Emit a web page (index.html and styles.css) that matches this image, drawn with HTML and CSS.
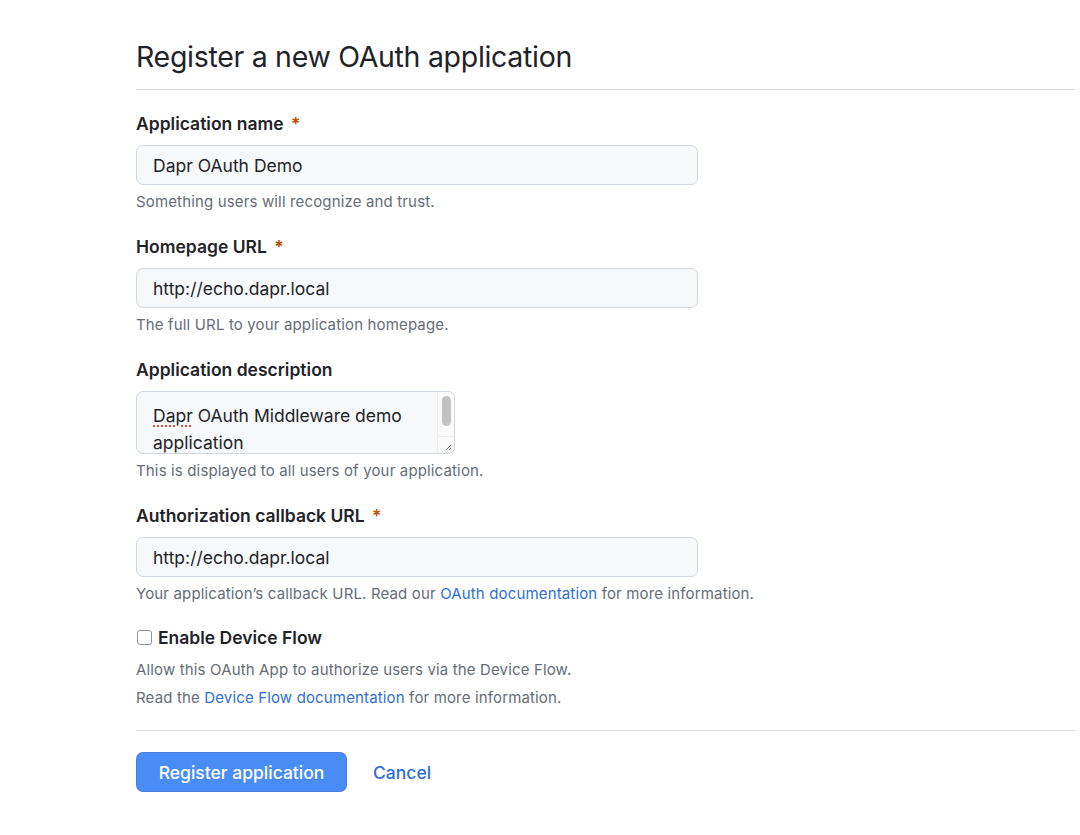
FILE: index.html
```html
<!DOCTYPE html>
<html>
<head>
<meta charset="utf-8">
<link rel="stylesheet" href="styles.css">
</head>
<body>
<main class="page">
  <h1 class="title">Register a new OAuth application</h1>
  <form class="form">
    <div class="group">
      <div class="label">Application name <span class="req">*</span></div>
      <div class="input">Dapr OAuth Demo</div>
      <div class="hint">Something users will recognize and trust.</div>
    </div>
    <div class="group">
      <div class="label">Homepage URL <span class="req">*</span></div>
      <div class="input">http://echo.dapr.local</div>
      <div class="hint">The full URL to your application homepage.</div>
    </div>
    <div class="group">
      <div class="label">Application description</div>
      <div class="textarea">
        <div class="ta-text"><span class="spell">Dapr</span> OAuth Middleware demo application</div>
        <div class="ta-bar">
          <div class="ta-track"><div class="ta-thumb"></div></div>
          <div class="ta-grip">
            <svg width="16" height="16" viewBox="0 0 16 16"><path d="M13 8 L8 13 M13 11 L11 13" stroke="#8a8a8a" stroke-width="1" fill="none"/></svg>
          </div>
        </div>
      </div>
      <div class="hint">This is displayed to all users of your application.</div>
    </div>
    <div class="group last">
      <div class="label">Authorization callback URL <span class="req">*</span></div>
      <div class="input">http://echo.dapr.local</div>
      <div class="hint">Your application’s callback URL. Read our <a class="link">OAuth documentation</a> for more information.</div>
    </div>
    <div class="check-row">
      <span class="checkbox"></span>
      <span class="check-label">Enable Device Flow</span>
    </div>
    <div class="note first">Allow this OAuth App to authorize users via the Device Flow.</div>
    <div class="note">Read the <a class="link">Device Flow documentation</a> for more information.</div>
    <div class="actions">
      <span class="btn">Register application</span>
      <a class="cancel">Cancel</a>
    </div>
  </form>
</main>
</body>
</html>
```
FILE: styles.css
```css
* { box-sizing: border-box; }
body {
  margin: 0;
  background: #ffffff;
  color: #1f2328;
  font-family: Inter, "Noto Sans", "Liberation Sans", sans-serif;
}
.page {
  padding: 38px 5px 0 136px;
}
.title {
  margin: 0;
  font-size: 28.5px;
  font-weight: 400;
  line-height: 38px;
  padding-bottom: 13px;
  border-bottom: 1px solid #d8dee4;
  letter-spacing: -0.3px;
}
.form {
  padding-top: 23px;
}
.group {
  margin-bottom: 24px;
}
.group.last {
  margin-bottom: 22px;
}
.label {
  font-size: 17.5px;
  font-weight: 600;
  line-height: 22px;
  margin-bottom: 10px;
}
.req {
  color: #bc4c00;
  margin-left: 3px;
}
.input {
  width: 562px;
  height: 40px;
  border: 1px solid #d0d7de;
  border-radius: 7px;
  background: #f6f8fa;
  padding: 0 16px;
  display: flex;
  align-items: center;
  font-size: 17.5px;
}
.hint {
  margin-top: 7px;
  font-size: 15px;
  line-height: 20px;
  color: #656d76;
  letter-spacing: 0.15px;
}
.link {
  color: #2f6fd6;
  text-decoration: none;
}
.textarea {
  width: 319px;
  height: 63px;
  border: 1px solid #d0d7de;
  border-radius: 7px;
  background: #f6f8fa;
  display: flex;
  overflow: hidden;
}
.ta-text {
  flex: 1;
  padding: 10px 0 0 16px;
  font-size: 17.5px;
  line-height: 27px;
}
.spell {
  text-decoration: underline dotted #e5483c;
  text-decoration-thickness: 2px;
  text-underline-offset: 3px;
}
.ta-bar {
  width: 17px;
  display: flex;
  flex-direction: column;
  background: #fafafa;
  border-left: 1px solid #ececec;
}
.ta-track {
  flex: 1;
  padding: 4px 3px 0 4px;
}
.ta-thumb {
  height: 30px;
  width: 9px;
  border-radius: 5px;
  background: #c2c2c2;
}
.ta-grip {
  height: 17px;
  border-top: 1px solid #ececec;
  display: flex;
  align-items: flex-end;
  justify-content: flex-end;
}
.check-row {
  display: flex;
  align-items: center;
  height: 22px;
}
.checkbox {
  width: 15px;
  height: 15px;
  border: 1px solid #8c959f;
  border-radius: 3px;
  background: #fff;
  margin: 0 6px 0 1px;
}
.check-label {
  font-size: 17.5px;
  font-weight: 600;
}
.note {
  font-size: 15px;
  line-height: 20px;
  color: #656d76;
  margin-top: 8px;
  letter-spacing: 0.15px;
}
.note.first {
  margin-top: 12px;
}
.actions {
  margin-top: 22px;
  border-top: 1px solid #d8dee4;
  padding-top: 21px;
  display: flex;
  align-items: center;
  gap: 26px;
}
.btn {
  display: inline-flex;
  align-items: center;
  justify-content: center;
  width: 211px;
  height: 40px;
  border-radius: 7px;
  background: #4a8cf5;
  color: #ffffff;
  font-size: 17.5px;
  font-weight: 500;
  border: 1px solid rgba(31,35,40,0.12);
}
.cancel {
  color: #2f6fd6;
  font-size: 17.5px;
  font-weight: 500;
}
```
